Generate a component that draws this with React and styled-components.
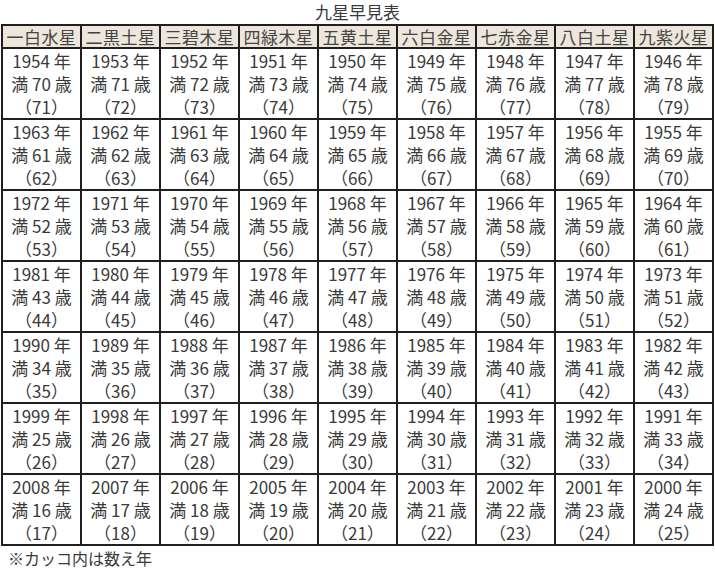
import React from "react";
import styled, { createGlobalStyle } from "styled-components";

const GlobalStyle = createGlobalStyle`
  body {
    margin: 0;
    background: #ffffff;
    font-family: "Noto Sans CJK JP", "Noto Sans", sans-serif;
    color: #3a3a3a;
  }
`;

const Container = styled.div`
  width: 715px;
  height: 570px;
  padding: 0 1px;
  box-sizing: border-box;
  display: flex;
  flex-direction: column;
`;

const Title = styled.div`
  height: 24px;
  line-height: 24px;
  text-align: center;
  font-size: 17px;
  color: #3a3a3a;
`;

const Table = styled.table`
  width: 713px;
  border-collapse: collapse;
  table-layout: fixed;
  border: 2px solid #1f1f1f;
`;

const HeadCell = styled.th`
  height: 21px;
  padding: 0;
  border: 2px solid #1f1f1f;
  background: #ece7da;
  font-weight: 400;
  font-size: 17px;
  line-height: 21px;
  letter-spacing: 0.5px;
  color: #444;
  text-align: center;
`;

const Cell = styled.td`
  height: 68.8px;
  padding: 0;
  border: 2px solid #1f1f1f;
  text-align: center;
  vertical-align: middle;
  font-size: 17px;
  line-height: 23px;
  color: #3a3a3a;
`;

const Line = styled.div`
  white-space: nowrap;
`;

const Note = styled.div`
  padding: 1px 0 0 7px;
  font-size: 16px;
  line-height: 22px;
  color: #3a3a3a;
`;

const stars = [
  "一白水星",
  "二黒土星",
  "三碧木星",
  "四緑木星",
  "五黄土星",
  "六白金星",
  "七赤金星",
  "八白土星",
  "九紫火星",
];

// 基準年 2024 時点の満年齢
const rows = [1954, 1963, 1972, 1981, 1990, 1999, 2008];

const App = () => {
  return (
    <Container>
      <GlobalStyle />
      <Title>九星早見表</Title>
      <Table>
        <thead>
          <tr>
            {stars.map((s) => (
              <HeadCell key={s}>{s}</HeadCell>
            ))}
          </tr>
        </thead>
        <tbody>
          {rows.map((start) => (
            <tr key={start}>
              {stars.map((s, i) => {
                const year = start - i;
                const age = 2024 - year;
                return (
                  <Cell key={s}>
                    <Line>{year} 年</Line>
                    <Line>満 {age} 歳</Line>
                    <Line>（{age + 1}）</Line>
                  </Cell>
                );
              })}
            </tr>
          ))}
        </tbody>
      </Table>
      <Note>※カッコ内は数え年</Note>
    </Container>
  );
};

export default App;
